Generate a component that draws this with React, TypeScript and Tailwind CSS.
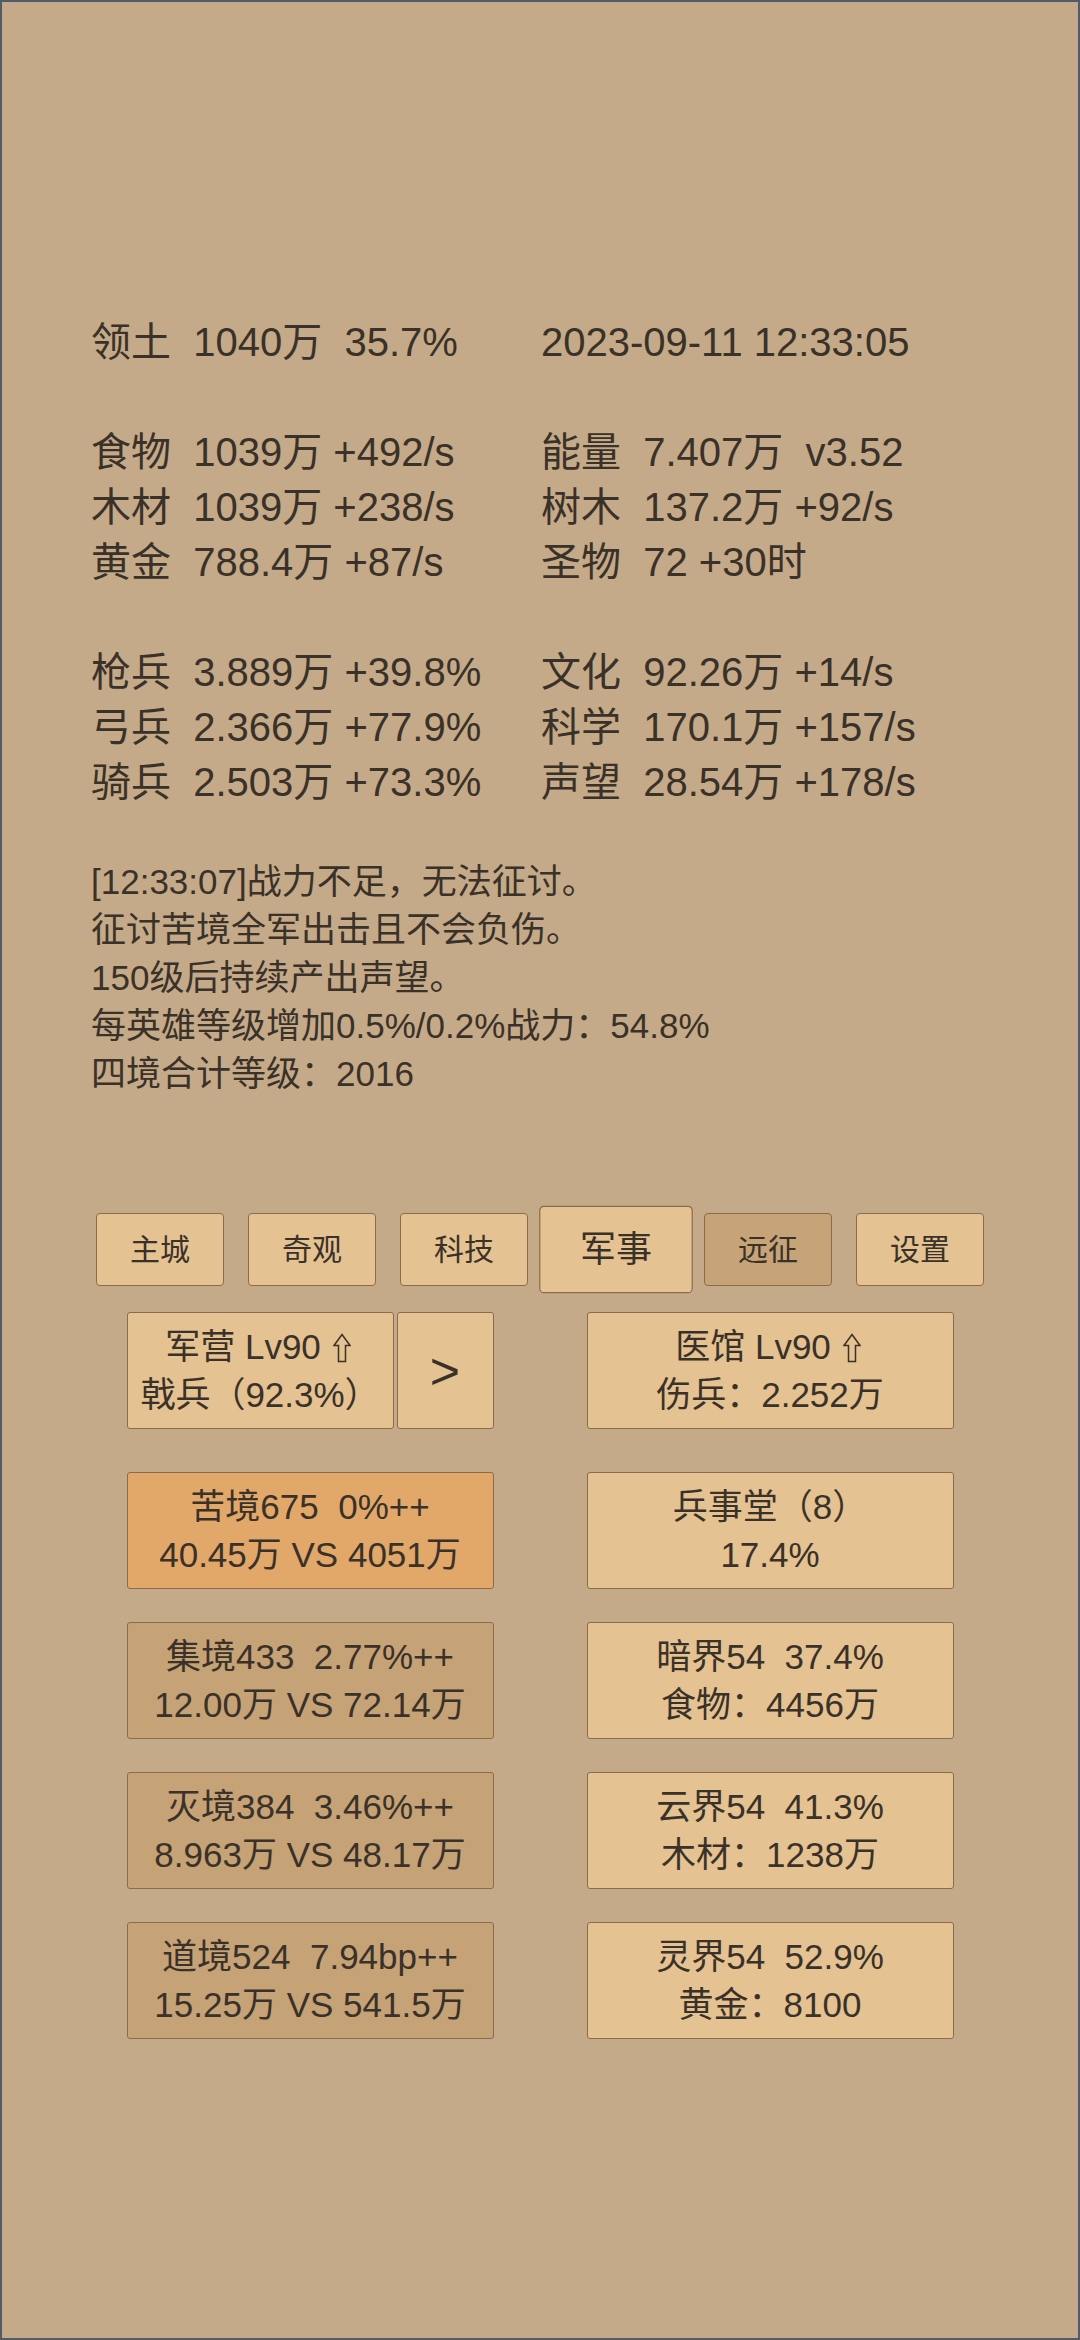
import React from "react";

const Up = () => (
  <svg
    width="18"
    height="30"
    viewBox="0 0 18 30"
    className="inline-block align-[-4px] ml-[12px] mr-[4px]"
    fill="none"
    stroke="#3a3129"
    strokeWidth="1.5"
  >
    <path d="M9 1.5 L17 12.5 L12.5 12.5 L12.5 28.5 L5.5 28.5 L5.5 12.5 L1 12.5 Z" />
  </svg>
);

const left = [
  "领土  1040万  35.7%",
  "",
  "食物  1039万 +492/s",
  "木材  1039万 +238/s",
  "黄金  788.4万 +87/s",
  "",
  "枪兵  3.889万 +39.8%",
  "弓兵  2.366万 +77.9%",
  "骑兵  2.503万 +73.3%",
];
const right = [
  "2023-09-11 12:33:05",
  "",
  "能量  7.407万  v3.52",
  "树木  137.2万 +92/s",
  "圣物  72 +30时",
  "",
  "文化  92.26万 +14/s",
  "科学  170.1万 +157/s",
  "声望  28.54万 +178/s",
];

const msgs = [
  "[12:33:07]战力不足，无法征讨。",
  "征讨苦境全军出击且不会负伤。",
  "150级后持续产出声望。",
  "每英雄等级增加0.5%/0.2%战力：54.8%",
  "四境合计等级：2016",
];

const tabs = [
  { name: "主城", cls: "bg-[#e4c291]" },
  { name: "奇观", cls: "bg-[#e4c291]" },
  { name: "科技", cls: "bg-[#e4c291]" },
  { name: "军事", cls: "bg-[#e4c291] scale-[1.2] border-[#7a5c3e]" },
  { name: "远征", cls: "bg-[#c6a478]" },
  { name: "设置", cls: "bg-[#e4c291]" },
];

const rows: { l: [string, string]; lc: string; r: [string, string] }[] = [
  { l: ["苦境675  0%++", "40.45万 VS 4051万"], lc: "bg-[#e2a86a]", r: ["兵事堂（8）", "17.4%"] },
  { l: ["集境433  2.77%++", "12.00万 VS 72.14万"], lc: "bg-[#c6a277]", r: ["暗界54  37.4%", "食物：4456万"] },
  { l: ["灭境384  3.46%++", "8.963万 VS 48.17万"], lc: "bg-[#c6a277]", r: ["云界54  41.3%", "木材：1238万"] },
  { l: ["道境524  7.94bp++", "15.25万 VS 541.5万"], lc: "bg-[#c6a277]", r: ["灵界54  52.9%", "黄金：8100"] },
];

const cardBase =
  "h-[117px] box-border border border-[#8a6c4c] rounded-[3px] flex flex-col items-center justify-center text-[35px] leading-[48px] whitespace-pre";

export default function App() {
  return (
    <div className="w-[1080px] h-[2340px] box-border border-2 border-[#535a68] bg-[#c4aa88] text-[#3a3129] font-[family-name:'Liberation_Sans','Noto_Sans_CJK_SC',sans-serif] overflow-hidden">
      <div className="pt-[313px] pl-[89px] grid grid-cols-[450px_450px] text-[40px] leading-[55px] whitespace-pre">
        {left.map((t, i) => (
          <React.Fragment key={i}>
            <div className="h-[55px]">{t}</div>
            <div className="h-[55px]">{right[i]}</div>
          </React.Fragment>
        ))}
      </div>

      <div className="mt-[48px] pl-[89px] text-[35px] leading-[48px] whitespace-pre">
        {msgs.map((m, i) => (
          <div key={i}>{m}</div>
        ))}
      </div>

      <div className="mt-[115px] flex justify-center gap-[24px]">
        {tabs.map((t) => (
          <div
            key={t.name}
            className={`w-[128px] h-[73px] box-border flex items-center justify-center rounded-[4px] border border-[#8a6c4c] text-[30px] ${t.cls}`}
          >
            {t.name}
          </div>
        ))}
      </div>

      <div className="mt-[26px] grid grid-cols-[367px_367px] justify-center gap-x-[93px] gap-y-[33px]">
        <div className="flex gap-[3px] mb-[10px]">
          <div className={`${cardBase} w-[267px] bg-[#e4c291]`}>
            <div>
              军营 Lv90
              <Up />
            </div>
            <div>戟兵（92.3%）</div>
          </div>
          <div className="w-[97px] h-[117px] box-border border border-[#8a6c4c] rounded-[3px] bg-[#e4c291] flex items-center justify-center text-[52px]">
            &gt;
          </div>
        </div>
        <div className={`${cardBase} bg-[#e4c291] mb-[10px]`}>
          <div>
            医馆 Lv90
            <Up />
          </div>
          <div>伤兵：2.252万</div>
        </div>
        {rows.map((r, i) => (
          <React.Fragment key={i}>
            <div className={`${cardBase} ${r.lc}`}>
              <div>{r.l[0]}</div>
              <div>{r.l[1]}</div>
            </div>
            <div className={`${cardBase} bg-[#e4c291]`}>
              <div>{r.r[0]}</div>
              <div>{r.r[1]}</div>
            </div>
          </React.Fragment>
        ))}
      </div>
    </div>
  );
}
